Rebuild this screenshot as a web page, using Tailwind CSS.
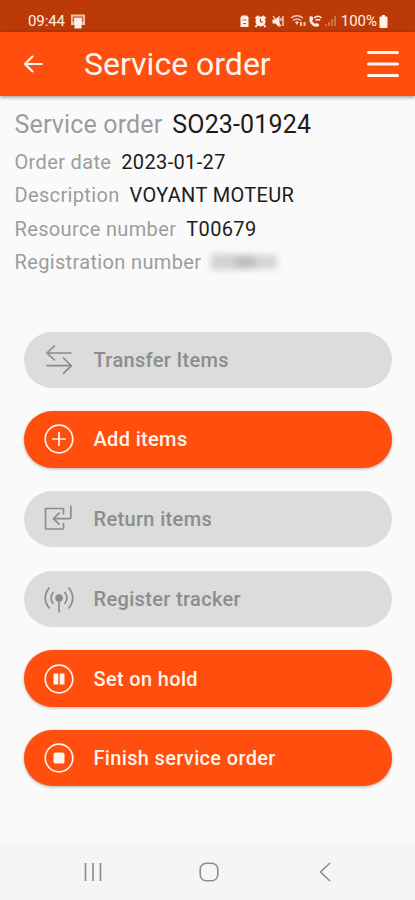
<!DOCTYPE html>
<html lang="en">
<head>
    <meta charset="UTF-8">
    <meta name="viewport" content="width=device-width, initial-scale=1.0">
    <title>Service order</title>
    <script src="https://cdn.jsdelivr.net/npm/@tailwindcss/browser@4"></script>
</head>
<body class="bg-[#fafafa] font-[Roboto,sans-serif]">
    <div class="w-full h-[900px] flex flex-col overflow-hidden">
        <!-- Status bar -->
        <div class="h-8 shrink-0 bg-[#bc3a08] text-[#fff1e8] flex items-end pl-7 pr-[27px] pb-[2px]">
            <span class="text-[15px] leading-[18px] tracking-[-0.1px]">09:44</span>
            <svg class="w-4 h-4 ml-[5px]" viewBox="0 0 16 16" fill="currentColor">
                <path d="M1 0.500h14v10.500H1z" opacity=".75"/>
                <path d="M3.300 8V3h9.400v5" stroke="#bc3a08" stroke-width=".9" fill="none"/>
                <path d="M4.500 4h7v10.500h-7z"/>
            </svg>
            <svg class="w-[98px] h-4 ml-auto mr-[4px] mb-px" viewBox="0 0 98 16" fill="currentColor">
                <path d="M3 2.500h5l1.500 2V14h-8V4.500z"/>
                <path d="M3.500 8l2-2 2 2M4 10.500h3" fill="none" stroke="#bc3a08" stroke-width=".8"/>
                <circle cx="21.500" cy="8.500" r="5"/>
                <path d="M16.500 5.500l3-2.500M26.500 5.500l-3-2.500M18 12l-1.500 2M25 12l1.500 2" stroke="currentColor" stroke-width="2"/>
                <path d="M21.500 5.500v3.500h2.500" fill="none" stroke="#bc3a08"/>
                <path d="M33.500 6.500h3l4-4v12l-4-4h-3z"/>
                <path d="M34 3l8 10M44 3v10M42 5v3" fill="none" stroke="currentColor" stroke-width="1.200"/>
                <g opacity=".8">
                    <path d="M52 5q6-4.500 12 0M54 7.500q4-3 8 0" fill="none" stroke="currentColor" stroke-width="1.500"/>
                    <path d="M56 9q2-1.500 4 0l-2 3zM61 9h2v4h-2zM64.500 9h2v4h-2z"/>
                </g>
                <path d="M71 3l3 1v3l-1 1 3 3 1-1 3 1v2q-4 2-7-1-4-4-2-9z"/>
                <path d="M75 5q4-3.500 7.500 0M76.500 7.500q2.500-2 4.500 0" fill="none" stroke="currentColor" stroke-width="1.500"/>
                <path d="M87 13v-2M90 13V9M93 13V6M96 13V3" stroke="currentColor" stroke-width="1.500" opacity=".4"/>
            </svg>
            <span class="text-[15px] leading-[18px]">100%</span>
            <svg class="w-[9px] h-[13px] ml-[2px] mb-[2px]" viewBox="0 0 9 13" fill="currentColor">
                <path d="M3 0h3v1.500h1.500q1 0 1 1V12q0 1-1 1h-6q-1 0-1-1V2.500q0-1 1-1H3z"/>
            </svg>
        </div>

        <!-- App bar -->
        <header class="h-16 shrink-0 bg-[#ff4e0d] text-[#fff6f0] flex items-center pl-[23px] pr-4 shadow-[0_1px_4px_rgba(0,0,0,0.45)]">
            <svg class="w-5 h-[18px]" viewBox="0 0 20 18" fill="none" stroke="currentColor" stroke-width="2.200">
                <path d="M19.500 9H2M10 1L2 9l8 8"/>
            </svg>
            <h1 class="ml-[41px] text-[32px] leading-10">Service order</h1>
            <svg class="w-8 h-7 ml-auto" viewBox="0 0 32 28" fill="none" stroke="currentColor" stroke-width="3" stroke-linecap="round">
                <path d="M1.500 2.500h29M1.500 14h29M1.500 25.500h29"/>
            </svg>
        </header>

        <!-- Order details -->
        <dl class="h-[235.700px] shrink-0 pl-[14.500px] pt-[11px] text-[20px] tracking-[0.35px] text-[#9c9c9e]">
            <div class="h-9 mb-[2px] flex items-center gap-[10px] text-[25px] tracking-[0.15px]">
                <dt>Service order</dt>
                <dd class="text-[#1c1c1c]">SO23-01924</dd>
            </div>
            <div class="h-[33.500px] flex items-center gap-[10px]">
                <dt>Order date</dt>
                <dd class="text-[#1c1c1c]">2023-01-27</dd>
            </div>
            <div class="h-[33.500px] flex items-center gap-[10px]">
                <dt>Description</dt>
                <dd class="text-[#1c1c1c]">VOYANT MOTEUR</dd>
            </div>
            <div class="h-[33.500px] flex items-center gap-[10px]">
                <dt>Resource number</dt>
                <dd class="text-[#1c1c1c]">T00679</dd>
            </div>
            <div class="h-[33.500px] flex items-center gap-[10px]">
                <dt>Registration number</dt>
                <dd class="w-[66px] h-[18px] flex items-center blur-[3px]">
                    <span class="w-6 h-4 bg-[#d2d2d2]"></span>
                    <span class="w-5 h-3.5 bg-[#bebebe]"></span>
                    <span class="w-[22px] h-3.5 bg-[#d4d4d4]"></span>
                </dd>
            </div>
        </dl>

        <!-- Actions -->
        <main class="px-[23.500px] flex flex-col gap-[23.500px] text-[20px] font-medium tracking-[0.34px]">
            <button class="h-[56.200px] rounded-full bg-[#dcdcdc] text-[#8c8c8c] flex items-center pl-5 gap-5">
                <svg class="w-[30px] h-[30px]" viewBox="0 0 30 30" fill="none" stroke="currentColor" stroke-width="1.700">
                    <path d="M27.500 8H3M11 0.500L3 8l8 7.500M2.500 20.700h25M19 12.500l8.300 8.200-8.300 8.200"/>
                </svg>
                <span>Transfer Items</span>
            </button>
            <button class="h-[56.200px] rounded-full bg-[#ff4e0d] text-[#fff3ea] flex items-center pl-5 gap-5 shadow-[0_1px_3px_rgba(0,0,0,0.3)]">
                <svg class="w-[30px] h-[30px]" viewBox="0 0 30 30" fill="none" stroke="currentColor" stroke-width="1.700">
                    <circle cx="15" cy="15" r="13.800"/>
                    <path d="M15 8v14M8 15h14"/>
                </svg>
                <span>Add items</span>
            </button>
            <button class="h-[56.200px] rounded-full bg-[#dcdcdc] text-[#8c8c8c] flex items-center pl-5 gap-5">
                <svg class="w-[30px] h-[30px]" viewBox="0 0 30 30" fill="none" stroke="currentColor" stroke-width="1.700">
                    <path d="M19.500 10.500V5q0-.5-.5-.5H2q-.5 0-.5.5v19.500q0 .5.5.5h17q.5 0 .5-.5V19M26.800 1.500V13q0 1.700-1.700 1.700H10M15.500 8.700l-6 6 6 6"/>
                </svg>
                <span>Return items</span>
            </button>
            <button class="h-[56.200px] rounded-full bg-[#dcdcdc] text-[#8c8c8c] flex items-center pl-5 gap-5">
                <svg class="w-[30px] h-[30px]" viewBox="0 0 30 30" fill="none" stroke="currentColor" stroke-width="1.700">
                    <circle cx="15" cy="14" r="3.800" fill="currentColor" stroke="none"/>
                    <path d="M15 15v13.500"/>
                    <path d="M9.500 8q-5 6 0 12M20.500 8q5 6 0 12M5.500 3.500q-8.500 10.500 0 21M24.500 3.500q8.500 10.500 0 21"/>
                </svg>
                <span>Register tracker</span>
            </button>
            <button class="h-[56.200px] rounded-full bg-[#ff4e0d] text-[#fff3ea] flex items-center pl-5 gap-5 shadow-[0_1px_3px_rgba(0,0,0,0.3)]">
                <svg class="w-[30px] h-[30px]" viewBox="0 0 30 30" fill="none" stroke="currentColor" stroke-width="1.700">
                    <circle cx="15" cy="15" r="13.800"/>
                    <path d="M9.500 9.500h4.800v11H9.500zM15.700 9.500h4.800v11h-4.800z" fill="currentColor" stroke="none"/>
                </svg>
                <span>Set on hold</span>
            </button>
            <button class="h-[56.200px] rounded-full bg-[#ff4e0d] text-[#fff3ea] flex items-center pl-5 gap-5 shadow-[0_1px_3px_rgba(0,0,0,0.3)]">
                <svg class="w-[30px] h-[30px]" viewBox="0 0 30 30" fill="none" stroke="currentColor" stroke-width="1.700">
                    <circle cx="15" cy="15" r="13.800"/>
                    <rect x="9.500" y="9.500" width="11" height="11" rx="2" fill="currentColor" stroke="none"/>
                </svg>
                <span>Finish service order</span>
            </button>
        </main>

        <!-- System navigation -->
        <nav class="mt-auto h-14 shrink-0 bg-[#f5f5f5] text-[#8f8f8f] flex items-center justify-between pl-[83.500px] pr-[81px]">
            <svg class="w-[18px] h-5" viewBox="0 0 18 20" fill="none" stroke="currentColor" stroke-width="1.700">
                <path d="M1.500 1v18M9 1v18M16.500 1v18"/>
            </svg>
            <svg class="w-5 h-5" viewBox="0 0 20 20" fill="none" stroke="currentColor" stroke-width="1.600">
                <rect x="1.200" y="1.200" width="17.600" height="17.600" rx="6"/>
            </svg>
            <svg class="w-[18px] h-5" viewBox="-3 0 18 20" fill="none" stroke="currentColor" stroke-width="1.600">
                <path d="M11 1l-9.500 9 9.500 9"/>
            </svg>
        </nav>
    </div>
</body>
</html>
